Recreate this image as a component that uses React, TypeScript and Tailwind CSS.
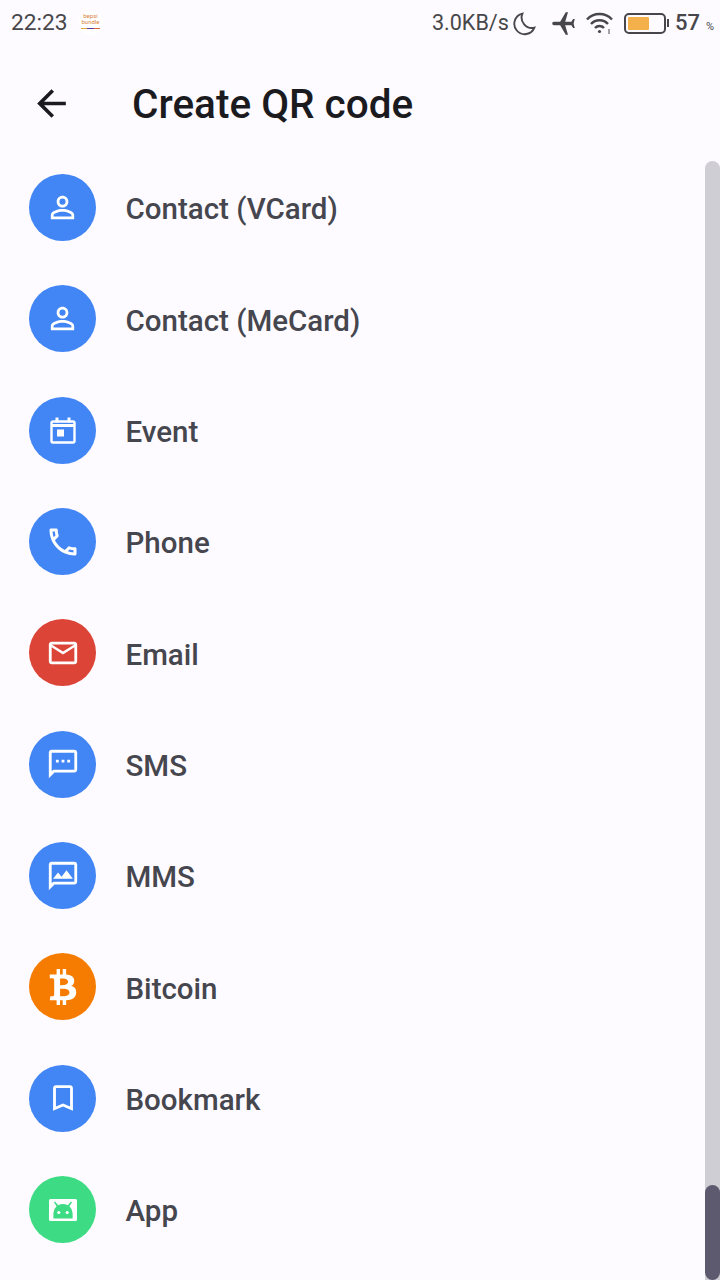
import React from "react";
import { MdOutlinePersonOutline, MdOutlinePhone, MdMailOutline, MdOutlineSms, MdOutlineMms, MdOutlineBookmarkBorder, MdArrowBack, MdAirplanemodeActive } from "react-icons/md";
import { FaBtc } from "react-icons/fa";

const AppIcon = () => (
  <svg viewBox="0 0 28 22" className="w-[28px] h-[22px]">
    <rect width="28" height="22" rx="1.5" fill="#fff" />
    <path fill="#3DDC84" d="M6 2.6 L9.2 6.2 A10 10 0 0 1 18.8 6.2 L22 2.6 L23 3.5 L20.4 7.2 A9.5 9.5 0 0 1 23.6 14 V19.5 H4.4 V14 A9.5 9.5 0 0 1 7.6 7.2 L5 3.5 Z" />
    <circle cx="9.8" cy="13.5" r="1.6" fill="#fff" />
    <circle cx="18.2" cy="13.5" r="1.6" fill="#fff" />
  </svg>
);

const EventIcon = () => (
  <svg viewBox="0 0 26 27" className="w-[26px] h-[27px]" fill="none">
    <path stroke="#fff" strokeWidth="2.4" d="M3 4.5h20a1.5 1.5 0 0 1 1.5 1.5v18a1.5 1.5 0 0 1-1.5 1.5H3A1.5 1.5 0 0 1 1.5 24V6A1.5 1.5 0 0 1 3 4.5z" />
    <path fill="#fff" d="M5.5 0.5h3v5h-3zM17.5 0.5h3v5h-3zM1.5 7h23v3h-23zM7 12.5h7v7H7z" />
  </svg>
);

const items = [
  { label: "Contact (VCard)", bg: "bg-[#4285f4]", icon: <MdOutlinePersonOutline size={35} color="#fff" /> },
  { label: "Contact (MeCard)", bg: "bg-[#4285f4]", icon: <MdOutlinePersonOutline size={35} color="#fff" /> },
  { label: "Event", bg: "bg-[#4285f4]", icon: <EventIcon /> },
  { label: "Phone", bg: "bg-[#4285f4]", icon: <MdOutlinePhone size={36} color="#fff" /> },
  { label: "Email", bg: "bg-[#db4437]", icon: <MdMailOutline size={34} color="#fff" /> },
  { label: "SMS", bg: "bg-[#4285f4]", icon: <MdOutlineSms size={34} color="#fff" /> },
  { label: "MMS", bg: "bg-[#4285f4]", icon: <MdOutlineMms size={34} color="#fff" /> },
  { label: "Bitcoin", bg: "bg-[#f57c00]", icon: <FaBtc size={36} color="#fff" /> },
  { label: "Bookmark", bg: "bg-[#4285f4]", icon: <MdOutlineBookmarkBorder size={34} color="#fff" /> },
  { label: "App", bg: "bg-[#3ddc84]", icon: <AppIcon /> },
];

const StatusBar = () => (
  <div className="h-[46px] flex items-center justify-between pl-[11px] pr-[6px] text-[#47474b]">
    <div className="flex items-center gap-[11px]">
      <span className="text-[22.7px] leading-none">22:23</span>
      <div className="w-[24px] h-[24px] rounded-full bg-white flex flex-col items-center">
        <span className="text-[6px] leading-[6px] mt-[2px] text-[#d8853f]">bepsi</span>
        <span className="text-[6px] leading-[6px] text-[#d8853f]">bundle</span>
        <div className="flex w-[19px] h-[1px] mt-[3px]">
          <div className="flex-1 bg-[#e2a23d]" />
          <div className="flex-1 bg-[#5a3f9e]" />
          <div className="flex-1 bg-[#d8653f]" />
        </div>
      </div>
    </div>
    <div className="flex items-center">
      <span className="text-[21.6px] leading-none">3.0KB/s</span>
      <svg viewBox="0 0 24 24" className="w-[25px] h-[25px] ml-[3px]" fill="none" stroke="#47474b" strokeWidth="1.8">
        <path d="M10 2.5a10 10 0 1 0 11.5 13.5A10 10 0 0 1 10 2.5z" />
      </svg>
      <MdAirplanemodeActive size={27} className="ml-[13px] rotate-[-90deg]" color="#47474b" />
      <svg viewBox="0 0 30 26" className="w-[30px] h-[26px] ml-[8px]" fill="none" stroke="#47474b" strokeWidth="2.4">
        <path d="M2 9.5a17 17 0 0 1 25 0" />
        <path d="M6 14a11.5 11.5 0 0 1 17 0" />
        <path d="M10 18a6 6 0 0 1 9 0" />
        <circle cx="14.5" cy="21.5" r="1.6" fill="#47474b" stroke="none" />
        <path d="M24 19v5" strokeWidth="1" />
      </svg>
      <div className="ml-[9px] w-[42px] h-[21px] rounded-[5px] border-[2.5px] border-[#47474b] p-[2px] flex">
        <div className="w-[21px] h-full bg-[#f4b04a] rounded-[1px]" />
      </div>
      <div className="w-[2px] h-[8px] bg-[#47474b] ml-[1px]" />
      <span className="ml-[6px] text-[22px] leading-none font-medium">57</span>
      <span className="ml-[6px] text-[11px] leading-none mt-[6px]">%</span>
    </div>
  </div>
);

export default function App() {
  return (
    <div className="relative w-[720px] h-[1280px] overflow-hidden bg-[#fdfbff]" style={{ fontFamily: "Roboto, sans-serif" }}>
      <StatusBar />
      <div className="h-[106px] flex items-center pt-[9px]">
        <MdArrowBack size={43} color="#1b1b1f" className="ml-[30px]" />
        <h1 className="ml-[59px] mt-[2px] text-[40.5px] leading-none font-medium text-[#1b1b1f]">Create QR code</h1>
      </div>
      <ul className="flex flex-col">
        {items.map((it) => (
          <li key={it.label} className="h-[111.33px] flex items-center pl-[29px] shrink-0">
            <span className={`w-[67px] h-[67px] rounded-full flex items-center justify-center ${it.bg}`}>{it.icon}</span>
            <span className="ml-[29.5px] mt-[5px] text-[29.5px] leading-none font-medium text-[#46464f]">{it.label}</span>
          </li>
        ))}
      </ul>
      <div className="absolute left-[705px] top-[161px] w-[15px] h-[1119px] rounded-t-full bg-[#cfced4]" />
      <div className="absolute left-[705px] top-[1185px] w-[15px] h-[95px] rounded-full bg-[#5d5a70]" />
    </div>
  );
}
